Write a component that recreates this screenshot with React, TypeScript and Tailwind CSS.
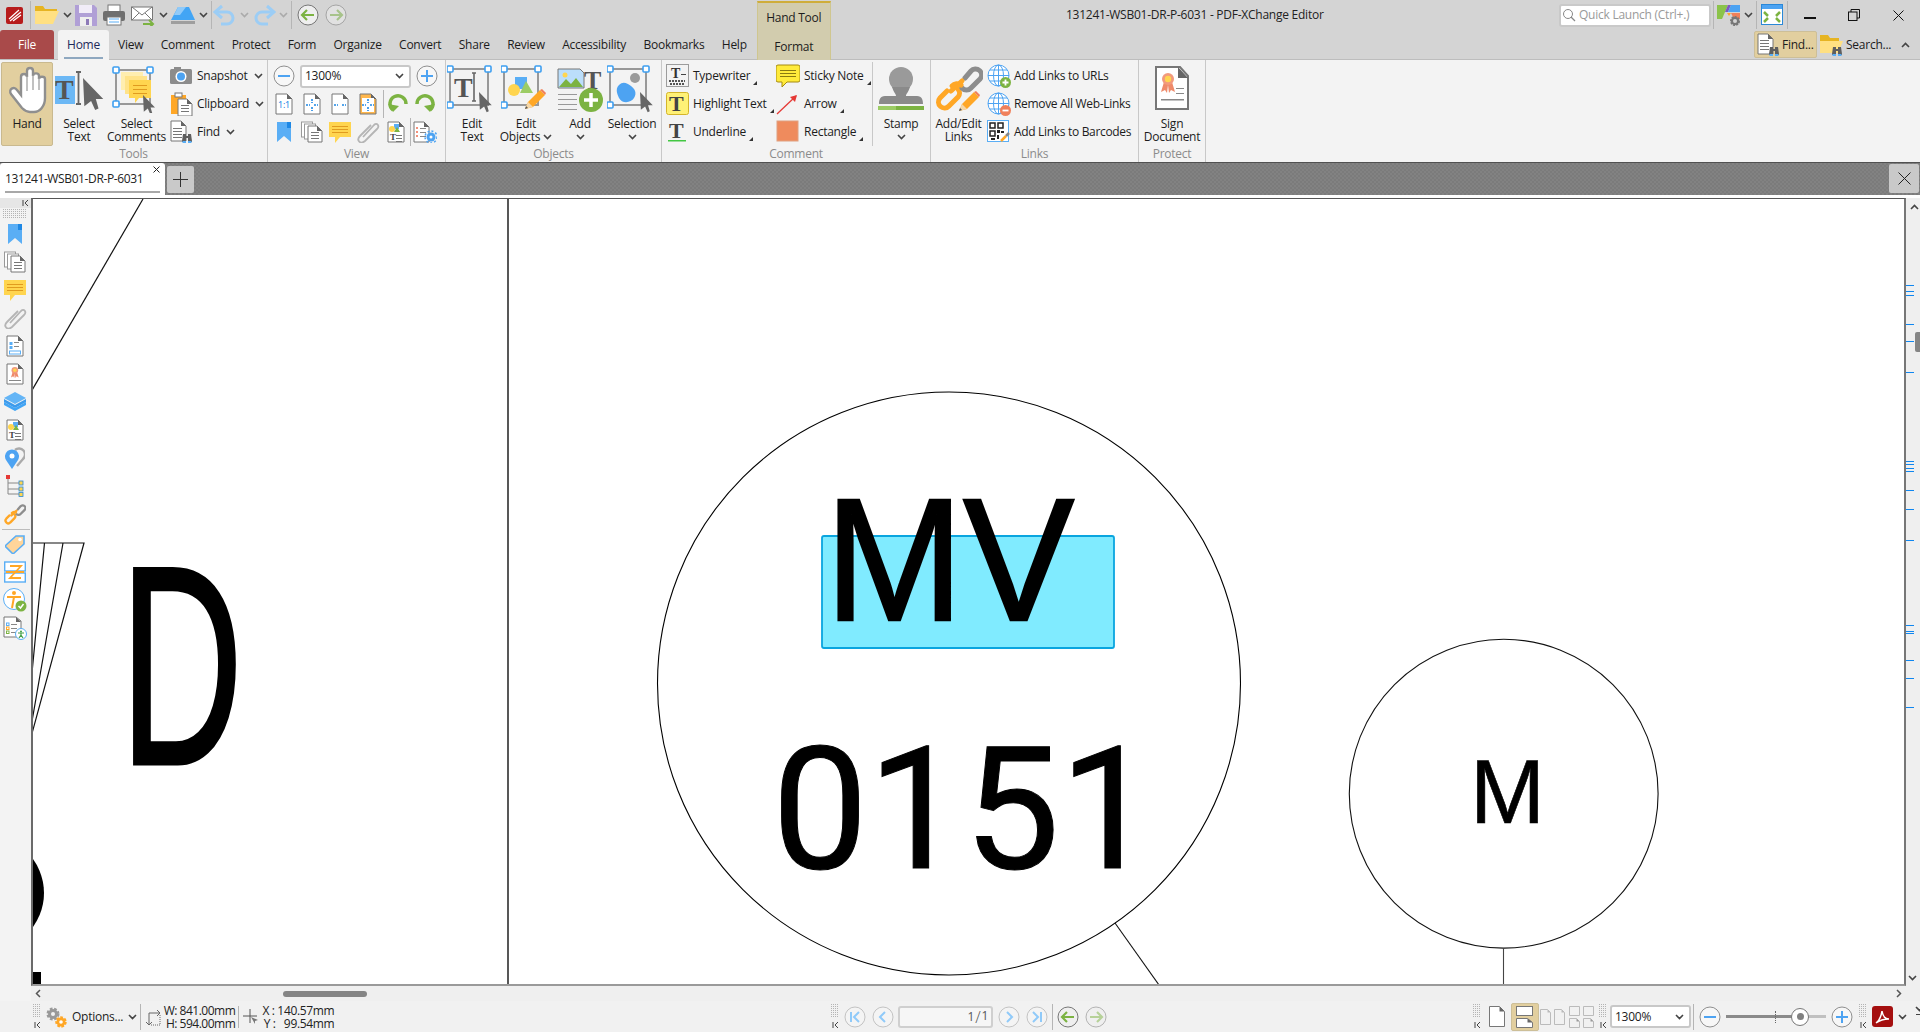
import React from 'react';

type P = { children?: React.ReactNode; w?: number; h?: number; className?: string };
const S = ({ children, w = 24, h = 24, className }: P) => (
  <svg width={w} height={h} viewBox={`0 0 ${w} ${h}`} className={`shrink-0 ${className ?? ''}`} fill="none">{children}</svg>
);
const BL = '#5aaef5', OR = '#ffa726', GN = '#7cb342', YL = '#ffd54f';

const Chev = ({ up, c = '#444' }: { up?: boolean; c?: string }) => (
  <S w={9} h={6}><path d={up ? 'M1 5l3.5-3.5L8 5' : 'M1 1l3.5 3.5L8 1'} stroke={c} strokeWidth="1.6" /></S>
);
const Tri = () => <S w={4} h={4} className="self-end mb-[5px] ml-[3px]"><path d="M4 0v4H0z" fill="#333" /></S>;
const Sep = ({ h = 28, c = '#b5b5b5', mx = 0 }: { h?: number; c?: string; mx?: number }) => (
  <div className="w-px shrink-0" style={{ height: h, background: c, marginLeft: mx, marginRight: mx }} />
);
const Dots = ({ w, h }: { w: number; h: number }) => (
  <S w={w} h={h}>
    {Array.from({ length: Math.floor(h / 2) }).map((_, r) =>
      Array.from({ length: Math.floor(w / 2) }).map((_, c) => <rect key={`${r}-${c}`} x={c * 2} y={r * 2} width={1} height={1} fill="#b4b4b4" />))}
  </S>
);
const Grip = () => (
  <div className="flex flex-col items-center w-[9px] shrink-0 gap-[2px]">
    <Dots w={9} h={15} />
    <S w={7} h={8}><path d="M1 1v6M6 1L3 4l3 3" stroke="#444" strokeWidth="1" /></S>
  </div>
);

/* document primitives */
const Doc = ({ x = 3, y = 1, w = 16, h = 21, s = '#777' }: { x?: number; y?: number; w?: number; h?: number; s?: string }) => (
  <>
    <path d={`M${x} ${y}h${w - 5}l5 5v${h - 5}h-${w}z`} fill="#fff" stroke={s} />
    <path d={`M${x + w - 5} ${y}l5 5h-5z`} fill="#666" />
  </>
);
const Lines = ({ x, y, w, n = 3, g = 3, c = '#888' }: { x: number; y: number; w: number; n?: number; g?: number; c?: string }) => (
  <>{Array.from({ length: n }).map((_, i) => <rect key={i} x={x} y={y + i * g} width={w} height={1} fill={c} />)}</>
);
const Bino = ({ x = 0, y = 0 }: { x?: number; y?: number }) => (
  <g transform={`translate(${x} ${y})`}>
    <path d="M1 2h3v2h2V2h3l1 7v1H6V6H4v4H0V9z" fill="#5f5f5f" />
    <rect x="0.5" y="9" width="3.5" height="2" fill={BL} /><rect x="6" y="9" width="3.5" height="2" fill={BL} />
  </g>
);
const Handles = ({ x, y, w, h, corners = [1, 1, 1, 0] }: { x: number; y: number; w: number; h: number; corners?: number[] }) => (
  <>
    <rect x={x} y={y} width={w} height={h} stroke="#999" strokeWidth="2" fill="none" />
    {[[x, y], [x + w, y], [x, y + h], [x + w, y + h]].map(([a, b], i) =>
      corners[i] ? <rect key={i} x={a - 3} y={b - 3} width={6} height={6} fill="#fff" stroke="#3d9ef0" strokeWidth="1.6" rx="1" /> : null)}
  </>
);
const Cursor = ({ x, y, k = 1 }: { x: number; y: number; k?: number }) => (
  <path transform={`translate(${x} ${y}) scale(${k})`} d="M0 0l15 15.5H9.5l2 7-2.5 1.2-3-6.7L1 21z" fill="#666" />
);
const Pencil = ({ x, y }: { x: number; y: number }) => (
  <g transform={`translate(${x} ${y})`}>
    <path d="M0 20l3-7L15 1l5 5L8 18z" fill={OR} /><path d="M15 1l2-1 4 4-1 2z" fill="#f0805a" />
    <path d="M0 20l3-7 5 5z" fill="#f5d7a8" /><path d="M0 20l1-3 2 2z" fill="#555" />
  </g>
);
const ChainO = ({ x = 0, y = 0, k = 1 }: { x?: number; y?: number; k?: number }) => (
  <g transform={`translate(${x} ${y}) scale(${k})`}>
    <path d="M12 27L5 34a6 6 0 0 0 9 8l9-9a6 6 0 0 0 0-8" stroke={OR} strokeWidth="5" fill="none" strokeLinecap="round" />
    <path d="M30 14l6-7a6 6 0 0 1 9 8l-9 9a6 6 0 0 1-9 0" stroke="#8d8d8d" strokeWidth="5" fill="none" strokeLinecap="round" />
    <path d="M17 22a7 7 0 0 1 9-1M16 27l11-10" stroke={OR} strokeWidth="5" fill="none" strokeLinecap="round" />
  </g>
);
const Seal = ({ x, y, k = 1 }: { x: number; y: number; k?: number }) => (
  <g transform={`translate(${x} ${y}) scale(${k})`}>
    <path d="M3 9L0 19l4-2 2 3 1-8 1 8 2-3 4 2-3-10z" fill="#ef8a6a" />
    <circle cx="7" cy="6" r="6" fill="#f29a7c" /><circle cx="7" cy="6" r="3.2" fill={YL} />
  </g>
);

/* quick access */
const Logo = () => (
  <S w={17} h={17}><rect width="17" height="17" rx="2" fill="#b71c1c" /><path d="M3 12L13 3M4 14L15 5M7 14l8-6" stroke="#fff" strokeWidth="1.2" /></S>
);
const Folder = () => (
  <S w={24} h={20}><path d="M0 1h8l2 3h12v4H0z" fill="#e6b422" /><path d="M0 19V6h4l-1 0h21l-6 13z" fill="#ffe082" /></S>
);
const Save = () => (
  <S w={22} h={22}><path d="M0 1h19l3 3v18H0z" fill="#b09fd6" /><rect x="4" y="1" width="13" height="8" fill="#f1ecf8" /><rect x="5" y="13" width="12" height="9" fill="#eee" /><rect x="11" y="15" width="3" height="6" fill="#8d7ab8" /></S>
);
const Printer = () => (
  <S w={22} h={22}><rect x="5" y="1" width="12" height="7" fill="#fff" stroke="#777" /><rect y="7" width="22" height="10" rx="2" fill="#6f6f6f" /><rect x="4" y="13" width="14" height="8" fill="#fff" stroke="#777" /><path d="M6 15h10M6 18h10" stroke={BL} /></S>
);
const Mail = () => (
  <S w={24} h={22}><rect x="0.5" y="3" width="21" height="13" fill="#fff" stroke="#777" /><path d="M1 3l10 8 10-8M1 16l7-7M21 16l-7-7" stroke="#777" /><path d="M12 20h9M18 16l4 4-4 4" stroke={GN} strokeWidth="2" /></S>
);
const Cloud = () => (
  <S w={24} h={20}><path d="M0 15L7 2h11l6 13z" fill="#42a5f5" /><path d="M7 2h8l-6 8H3z" fill="#90caf9" /><rect y="16" width="24" height="3" fill="#9e9e9e" /></S>
);
const Undo = ({ flip }: { flip?: boolean }) => (
  <S w={22} h={22}><g transform={flip ? 'translate(22 0) scale(-1 1)' : undefined}><path d="M4 8h10a6 6 0 0 1 0 12H8" stroke="#9ccdf5" strokeWidth="3" /><path d="M9 2L2 8l7 6" stroke="#9ccdf5" strokeWidth="3" /></g></S>
);
const CircArrow = ({ dir = -1, faded, s = 22, ic = GN }: { dir?: number; faded?: boolean; s?: number; ic?: string }) => (
  <S w={s} h={s}>
    <g opacity={faded ? 0.5 : 1} transform={`scale(${s / 22})`}>
      <circle cx="11" cy="11" r="10" fill="#efefef" stroke="#777" />
      <path d={dir < 0 ? 'M17 11H6M10 6l-5 5 5 5' : 'M5 11h11M12 6l5 5-5 5'} stroke={ic} strokeWidth="2.2" />
    </g>
  </S>
);
const NavCirc = ({ kind }: { kind: string }) => (
  <S w={22} h={22}>
    <circle cx="11" cy="11" r="10" fill="#f4f4f4" stroke="#c3c3c3" />
    <path d={kind === 'first' ? 'M7 6v10M15 6l-5 5 5 5' : kind === 'prev' ? 'M13 6l-5 5 5 5' : kind === 'next' ? 'M9 6l5 5-5 5' : 'M15 6v10M7 6l5 5-5 5'} stroke="#90caf9" strokeWidth="2" />
  </S>
);
const Zoomer = ({ plus }: { plus?: boolean }) => (
  <S w={22} h={22}>
    <circle cx="11" cy="11" r="10" fill="#f7f7f7" stroke="#8f8f8f" />
    <path d={plus ? 'M5 11h12M11 5v12' : 'M5 11h12'} stroke="#4da3f2" strokeWidth="2" />
  </S>
);

/* big ribbon icons (48x48ish) */
const HandIco = () => (
  <S w={40} h={50}>
    <path d="M15 43L4 29c-3-5 3-8 6-4l4 5V12c0-4 6-4 6 0V6c0-4 6-4 6 0v5c0-3.500 6-3.500 6 0v3c0-3 6-3 6 0v19c0 8-5 14-11 14H23c-3 0-6-2-8-4z" fill="#fff" stroke="#8f8f8f" strokeWidth="2.400" />
    <path d="M20 11v15M26 10v15M32 13v12" stroke="#a0a0a0" strokeWidth="1.300" />
  </S>
);
const T = ({ x, y, s = 24, c = '#555' }: { x: number; y: number; s?: number; c?: string }) => (
  <text x={x} y={y} fontSize={s} fontWeight="700" fill={c} fontFamily="'Liberation Serif',serif">T</text>
);
const SelTextIco = () => (
  <S w={50} h={48}>
    <rect x="1" y="11" width="20" height="28" fill="#6cb8f5" />
    <T x={1} y={34} s={28} />
    <path d="M22 7h5M24.500 7v32M22 39h5" stroke="#666" strokeWidth="1.8" />
    <Cursor x={29} y={13} k={1.35} />
  </S>
);
const SelComIco = () => (
  <S w={50} h={48}>
    <Handles x={4} y={5} w={34} h={34} />
    <rect x="9" y="7" width="22" height="18" fill="#ffeeb0" /><rect x="13" y="11" width="22" height="18" fill="#ffe38a" />
    <path d="M17 15h22v18H27l-4 5v-5h-6z" fill={YL} /><Lines x={21} y={20} w={14} g={4} c="#e09b1f" />
    <Cursor x={31} y={30} k={0.8} />
  </S>
);
const EditTextIco = () => (
  <S w={50} h={48}>
    <Handles x={3} y={4} w={38} h={36} corners={[1, 1, 1, 0]} />
    <T x={7} y={32} s={28} />
    <path d="M25 8h4M27 8v28M25 36h4" stroke="#666" strokeWidth="1.6" />
    <Cursor x={32} y={27} k={0.85} />
  </S>
);
const EditObjIco = () => (
  <S w={50} h={48}>
    <Handles x={3} y={4} w={34} h={36} />
    <rect x="14" y="12" width="12" height="12" fill={BL} /><path d="M19 28l6-12 7 12z" fill="#9ccc65" /><circle cx="13" cy="25" r="6" fill={YL} />
    <Pencil x={24} y={24} />
  </S>
);
const AddIco = () => (
  <S w={48} h={48}>
    <path d="M2 4h22l4 4v15H2z" fill="#bbdefb" stroke="#777" /><path d="M3 22l7-8 5 5 5-6 7 9z" fill={GN} /><circle cx="9" cy="10" r="2.500" fill={YL} />
    <T x={28} y={24} s={26} />
    <Lines x={2} y={29} w={19} n={4} g={5} c="#999" />
    <circle cx="35" cy="35" r="12" fill={GN} /><path d="M35 28v14M28 35h14" stroke="#fff" strokeWidth="3.500" />
  </S>
);
const SelectionIco = () => (
  <S w={50} h={48}>
    <Handles x={3} y={4} w={36} h={36} />
    <path d="M12 20c4-4 8-2 12 1s6 7 3 12-12 6-15 0-3-10 0-13z" fill="#4da3f2" /><circle cx="28" cy="13" r="5" fill="#9a9a9a" />
    <Cursor x={33} y={27} k={0.85} />
  </S>
);
const StampIco = () => (
  <S w={48} h={48}>
    <circle cx="24" cy="14" r="12" fill="#9a9a9a" /><path d="M15 22c2 6 4 7 4 9H8c-5 0-6 4-6 8h44c0-4-1-8-6-8H29c0-2 2-3 4-9z" fill="#8a8a8a" />
    <rect x="1" y="41" width="18" height="4" fill="#9ccc65" /><rect x="19" y="41" width="28" height="4" fill={GN} />
  </S>
);
const AddLinkIco = () => (
  <S w={48} h={48}><ChainO y={-1} /><Pencil x={24} y={26} /></S>
);
const SignIco = () => (
  <S w={36} h={46}>
    <path d="M2 2h24l8 9v33H2z" fill="#fff" stroke="#777" strokeWidth="2" /><path d="M24 2l10 11H24z" fill="#666" />
    <Seal x={7} y={8} k={1} /><Lines x={22} y={23} w={8} n={2} g={5} c="#888" /><rect x="7" y="34" width="23" height="1.500" fill="#888" />
  </S>
);

/* small 24 */
const Snapshot = () => (
  <S><rect y="5" width="22" height="15" rx="1.500" fill="#8c8c8c" /><rect x="4" y="3" width="7" height="3" fill="#8c8c8c" /><circle cx="11" cy="12.500" r="5.500" fill="#fff" /><circle cx="11" cy="12.500" r="4" fill="#4da3f2" /></S>
);
const Clipboard = () => (
  <S><rect x="1" y="3" width="15" height="19" fill={OR} /><rect x="5" y="1" width="7" height="4" fill="#fff" stroke="#777" /><Doc x={8} y={7} w={14} h={17} /><Lines x={11} y={13} w={8} c="#777" /></S>
);
const FindIco = () => (
  <S><Doc x={1} y={1} w={15} h={20} /><Lines x={3} y={8} w={9} n={4} c="#777" /><Bino x={12} y={12} /></S>
);
const ZoomDoc = ({ kind }: { kind: string }) => (
  <S w={18} h={22}>
    <path d="M1 1h11l5 5v15H1z" fill={kind === 'o' ? '#ffb74d' : '#fff'} stroke="#777" /><path d="M12 1l5 5h-5z" fill="#666" />
    {kind === 'o' && <rect x="3" y="5" width="12" height="14" fill="#fff" />}
    {kind === '1' ? <text x="3" y="15" fontSize="9" fill="#1e88e5" fontFamily="'Noto Sans',sans-serif">1:1</text> :
      <path d={kind === 'w' ? 'M3 12h4M11 12h4' : 'M3 12h4M11 12h4M9 6v4M9 14v4'} stroke="#1e88e5" strokeWidth="1.600" strokeDasharray="2 1" />}
  </S>
);
const Rotate = ({ flip }: { flip?: boolean }) => (
  <S w={22} h={22}><g transform={flip ? 'translate(22 0) scale(-1 1)' : undefined}><path d="M6 17a8 8 0 1 1 13-6" stroke={GN} strokeWidth="3.500" /><path d="M1 11l5 8 6-6z" fill={GN} /></g></S>
);
const Bookmark = ({ s = 20 }: { s?: number }) => (
  <S w={14} h={s}><path d={`M0 0h14v${s}l-7-6-7 6z`} fill="#5aaef5" /><rect x="10" width="4" height="6" fill="#1e88e5" /></S>
);
const Pages = () => (
  <S w={22} h={22}><rect x="0.500" y="1" width="11" height="15" fill="#fff" stroke="#999" /><rect x="3.500" y="3" width="11" height="15" fill="#fff" stroke="#999" /><Doc x={7} y={5} w={14} h={16} /><Lines x={10} y={11} w={8} c="#777" /></S>
);
const Note = () => (
  <S w={22} h={22}><path d="M0 1h22v15H11l-5 6v-6H0z" fill={YL} /><Lines x={3} y={5} w={16} n={3} c="#e09b1f" /></S>
);
const Clip = () => (
  <S w={23} h={22}><path d="M6 16L17 4c3-3 6 1 3 4L8 20c-5 4-9-1-5-5L14 4" stroke="#b5b5b5" strokeWidth="1.800" /></S>
);
const ObjDoc = () => (
  <S w={18} h={22}><Doc x={1} y={1} w={16} h={20} /><rect x="7" y="3" width="5" height="5" fill={BL} /><circle cx="5" cy="8" r="3" fill={YL} /><path d="M7 11l3-5 3 5z" fill={GN} /><T x={3} y={19} s={9} c="#444" /><Lines x={9} y={14} w={6} c="#777" /></S>
);
const ListCog = () => (
  <S w={24} h={22}>
    <Doc x={1} y={1} w={15} h={20} />
    <path d="M3 7h2M3 11h2M3 15h2" stroke="#ef6c4f" strokeWidth="1.500" /><Lines x={7} y={7} w={6} n={3} g={4} c="#888" />
    <circle cx="18" cy="16" r="4.500" fill="#4da3f2" /><circle cx="18" cy="16" r="6" stroke="#4da3f2" strokeWidth="1.500" strokeDasharray="2 2" /><circle cx="18" cy="16" r="1.500" fill="#fff" />
  </S>
);
const Typewriter = () => (
  <S><rect x="0.500" y="0.500" width="22" height="22" fill="none" stroke="#444" strokeDasharray="1 1" /><T x={5} y={14} s={14} c="#333" /><rect x="15" y="10" width="5" height="1" fill="#444" /><path d="M3 17h16M4 20h14" stroke="#555" strokeWidth="2" strokeDasharray="2 1" /></S>
);
const HiliteT = () => (
  <S><rect x="0.500" y="0.500" width="22" height="22" rx="2" fill="#fff176" stroke="#d4b52a" /><T x={3} y={19} s={22} c="#444" /></S>
);
const UnderT = () => (
  <S><T x={3} y={18} s={22} c="#444" /><rect x="2" y="20" width="18" height="1.500" fill="#43c743" /></S>
);
const Sticky = () => (
  <S h={24}><path d="M2 1h20a2 2 0 0 1 2 2v13a2 2 0 0 1-2 2H11l-5 5v-5H2a2 2 0 0 1-2-2V3a2 2 0 0 1 2-2z" fill="#ffeb3b" stroke="#a58a10" /><Lines x={4} y={6} w={16} n={3} c="#8a7a10" /></S>
);
const ArrowI = () => (
  <S><path d="M1 22L20 4" stroke="#e53935" strokeWidth="1.300" /><path d="M21 3l-7 2 5 5z" fill="#e53935" /></S>
);
const RectI = () => <S><rect x="1" y="1" width="21" height="20" fill="#ef8b5d" stroke="#e0a080" /></S>;
const Globe = ({ kind }: { kind: string }) => (
  <S w={25} h={25}>
    <circle cx="11.500" cy="11.500" r="10.500" fill="#fff" stroke="#4da3f2" />
    <ellipse cx="11.500" cy="11.500" rx="5" ry="10.500" stroke="#4da3f2" /><path d="M1 11.500h21M3 6h17M3 17h17M11.500 1v21" stroke="#4da3f2" />
    <circle cx="18.500" cy="18.500" r="5.500" fill={kind === 'a' ? GN : '#f0805a'} />
    <path d={kind === 'a' ? 'M15.500 18.500h6M18.500 15.500v6' : 'M15.500 18.500h6'} stroke="#fff" strokeWidth="1.800" />
  </S>
);
const Qr = () => (
  <S w={24} h={24}>
    <rect x="0.500" y="0.500" width="21" height="21" fill="#fff" stroke={BL} />
    <path d="M3 3h5v5H3zM11 3h5v5h-5zM3 11h5v5H3z" stroke="#222" strokeWidth="1.500" /><path d="M10 10h3v3h-3zM14 11h3v2h-3zM4 18h4v2H4zM10 15h2v4h-2z" fill="#222" />
    <path d="M14 21l5-5" stroke={OR} strokeWidth="2.500" /><path d="M19 16l3-3" stroke="#888" strokeWidth="2.500" />
  </S>
);

/* rail */
const Rail: React.ReactNode[] = [
  <Bookmark key="a" />, <Pages key="b" />, <Note key="c" />, <Clip key="d" />,
  <S key="e" w={18} h={22}><Doc x={1} y={1} w={16} h={20} /><rect x="3.500" y="7" width="3" height="3" fill={BL} /><rect x="3.500" y="11" width="3" height="3" fill={BL} /><Lines x={8} y={7} w={5} n={2} g={4} c="#888" /><rect x="3.500" y="16" width="11" height="3" stroke={BL} /></S>,
  <S key="f" w={18} h={22}><Doc x={1} y={1} w={16} h={20} /><Seal x={5} y={4} k={0.55} /><Lines x={3} y={17} w={12} n={1} c="#888" /></S>,
  <S key="g" w={22} h={20}><path d="M11 0l11 6-11 6L0 6z" fill="#64b5f6" /><path d="M0 10l11 6 11-6v3l-11 6-11-6z" fill="#42a5f5" /><path d="M0 7l11 6 11-6v3l-11 6-11-6z" fill="#3d9bec" /></S>,
  <ObjDoc key="h" />,
  <S key="i" w={20} h={22}><path d="M10 3a6 6 0 0 1 8 9l-6 7" stroke="#aaa" strokeWidth="2.400" /><path d="M7 22L1 13a7 7 0 1 1 12 0z" fill="#4da3f2" /><circle cx="7" cy="9" r="2.500" fill="#fff" /></S>,
  <S key="j" w={20} h={22}><rect x="1" y="0" width="4" height="4" fill="#e53935" /><path d="M3 4v15M3 8h12M3 14h12M3 19h12" stroke="#888" /><rect x="14" y="6" width="4" height="4" fill={YL} stroke="#2a88d8" strokeWidth="0.800" /><rect x="14" y="12" width="4" height="4" fill={YL} stroke="#2a88d8" strokeWidth="0.800" /><rect x="14" y="17.500" width="4" height="4" fill={YL} stroke="#2a88d8" strokeWidth="0.800" /></S>,
  <S key="k" w={22} h={22}><ChainO k={0.46} /></S>,
];
const Rail2: React.ReactNode[] = [
  <S key="l" w={20} h={20}><path d="M0 12L11 2h8v8L8 20z" fill="#ffd59a" stroke="#5aaef5" strokeWidth="1.600" /><circle cx="15" cy="5.500" r="1.800" fill="#fff" /></S>,
  <S key="m" w={22} h={22}><rect x="0.700" y="1" width="20.600" height="9" fill="#fff" stroke={BL} strokeWidth="1.400" /><rect x="0.700" y="12" width="20.600" height="9" fill="#fff" stroke={BL} strokeWidth="1.400" /><path d="M6 5h11L6 17h11M2 11h18" stroke={OR} strokeWidth="1.800" /></S>,
  <S key="n" w={24} h={24}><circle cx="11" cy="11" r="10.500" fill="#fff" stroke={BL} /><circle cx="11" cy="5" r="2" fill={OR} /><path d="M4 9h14M11 9L9 20" stroke={OR} strokeWidth="2" /><circle cx="18" cy="18" r="5.500" fill={GN} /><path d="M15.500 18l2 2 3-4" stroke="#fff" strokeWidth="1.500" /></S>,
  <S key="o" w={24} h={24}><path d="M1 1h12l5 4v16H1z" fill="#fff" stroke="#777" /><path d="M13 1l5 5h-5z" fill="#666" /><rect x="3.500" y="7" width="2.500" height="2.500" stroke={BL} /><rect x="3.500" y="11" width="2.500" height="2.500" stroke={OR} /><rect x="3.500" y="15" width="2.500" height="2.500" stroke={GN} /><Lines x={8} y={8} w={6} n={3} g={4} c="#888" /><circle cx="18" cy="18" r="5.500" fill="#fff" stroke={BL} /><circle cx="18" cy="15.500" r="1" fill="#43a047" /><path d="M15 17h6M18 17v2l-2 3M18 19l2 3" stroke="#43a047" strokeWidth="1.200" /></S>,
];

/* ribbon pieces */
const Big = ({ w, icon, lines, chev, k }: { w: number; icon: React.ReactNode; lines: string[]; chev?: boolean; k?: string }) => (
  <div style={{ width: w }} className={`shrink-0 h-[84px] flex flex-col items-center ${k ?? ''}`}>
    <div className="h-[55px] pt-[3px] flex items-start justify-center">{icon}</div>
    {lines.map(l => <div key={l} className="h-[13px] leading-[13px] whitespace-nowrap flex items-center gap-[3px]">{l}{chev && l === lines[lines.length - 1] && lines.length > 1 ? <Chev /> : null}</div>)}
    {chev && lines.length === 1 && <div className="h-[13px] flex items-center"><Chev /></div>}
  </div>
);
const Row = ({ icon, label, chev, tri, gap = 3, w }: { icon: React.ReactNode; label: string; chev?: boolean; tri?: boolean; gap?: number; w?: number }) => (
  <div className="h-[28px] flex items-center whitespace-nowrap" style={{ width: w }}>
    <div style={{ marginRight: gap }} className="shrink-0 flex">{icon}</div>
    <span>{label}</span>
    {chev && <span className="ml-[6px] flex"><Chev /></span>}
    {tri && <Tri />}
  </div>
);
const Group = ({ w, label, children }: { w: number; label: string; children: React.ReactNode }) => (
  <div style={{ width: w }} className="shrink-0 h-full flex flex-col border-r border-[#c8c8c8]">
    <div className="h-[84px] mt-[2px] flex items-start">{children}</div>
    <div className="flex-1 text-center text-[#8b8b8b] leading-[14px] pt-[1px]">{label}</div>
  </div>
);
const Cell = ({ w, children }: { w: number; children: React.ReactNode }) => (
  <div style={{ width: w }} className="shrink-0 flex justify-center items-center h-[28px]">{children}</div>
);

const tabs = ['View', 'Comment', 'Protect', 'Form', 'Organize', 'Convert', 'Share', 'Review', 'Accessibility', 'Bookmarks', 'Help'];
const marks = [285, 291, 295, 324, 341, 372, 461, 464, 468, 471, 490, 509, 540, 625, 631, 633, 660, 678, 707];

const Combo = ({ w }: { w: number }) => (
  <div style={{ width: w }} className="h-[23px] bg-white border-2 border-[#c8c8c8] rounded-[3px] flex items-center justify-between pl-[3px] pr-[5px]">
    <span>1300%</span><Chev />
  </div>
);

export default function App() {
  return (
    <div className="w-[1920px] h-[1032px] overflow-hidden flex flex-col bg-[#f3f3f3] text-[#1c1c1c] text-[12px] font-['Open_Sans',sans-serif] tracking-[-0.25px]">
      {/* title bar */}
      <div className="h-[30px] shrink-0 bg-[#d4d4d4] flex items-center">
        <div className="w-[1066px] shrink-0 flex items-center h-full">
          <div className="ml-[6px] mr-[7px] flex"><Logo /></div>
          <Sep />
          <div className="ml-[4px] flex"><Folder /></div>
          <div className="ml-[4px] mr-[3px] flex"><Chev /></div>
          <Save />
          <div className="ml-[6px] flex"><Printer /></div>
          <div className="ml-[6px] flex"><Mail /></div>
          <div className="ml-[4px] mr-[3px] flex"><Chev /></div>
          <Cloud />
          <div className="ml-[4px] mr-[3px] flex"><Chev /></div>
          <Sep />
          <div className="ml-[1px] flex"><Undo /></div>
          <div className="ml-[5px] mr-[5px] flex"><Chev c="#aaa" /></div>
          <Undo flip />
          <div className="ml-[3px] mr-[3px] flex"><Chev c="#aaa" /></div>
          <Sep />
          <div className="ml-[5px] flex"><CircArrow /></div>
          <div className="ml-[6px] flex"><CircArrow dir={1} faded /></div>
        </div>
        <div className="whitespace-nowrap -mt-[1px] text-[#222] w-[493px] shrink-0">131241-WSB01-DR-P-6031 - PDF-XChange Editor</div>
        <div className="w-[152px] h-[23px] shrink-0 bg-white border-2 border-[#c9c9c9] rounded-[3px] flex items-center pl-[1px] gap-[3px] text-[#9a9a9a]">
          <S w={14} h={14}><circle cx="6" cy="6" r="4.500" stroke="#888" /><path d="M9 9l4 4" stroke="#888" strokeWidth="1.300" /></S>
          <span className="whitespace-nowrap">Quick Launch (Ctrl+.)</span>
        </div>
        <div className="ml-[2px] flex"><Sep /></div>
        <div className="ml-[3px] flex">
          <S w={24} h={24}><path d="M0 2h11L5 16H0z" fill="#8bc34a" /><path d="M11 2h3l-3 7H8z" fill="#7e57c2" /><path d="M14 2h9v7H11z" fill="#4da3f2" /><path d="M10 10h4l-2 3z" fill={OR} /><path d="M14 10h9v6h-6z" fill="#f0805a" /><circle cx="18" cy="18" r="4" fill="#777" stroke="#777" strokeWidth="2" strokeDasharray="2 1" /><circle cx="18" cy="18" r="2" fill="#d4d4d4" /></S>
        </div>
        <div className="ml-[3px] mr-[3px] flex"><Chev /></div>
        <Sep />
        <div className="ml-[4px] flex">
          <S w={22} h={22}><rect x="0.500" y="0.500" width="21" height="20" fill="#fff" stroke="#2a88d8" /><rect x="1" y="1" width="20" height="4" fill="#4da3f2" /><path d="M3 8l4 4M19 8l-4 4M3 18l4-4M19 18l-4-4" stroke={GN} strokeWidth="2.500" /></S>
        </div>
        <div className="ml-[4px] flex"><Sep /></div>
        <div className="flex-1 flex items-center">
          <div className="w-[44px] flex justify-center pt-[6px]"><div className="w-[12px] h-[1.5px] bg-[#111]" /></div>
          <div className="w-[44px] flex justify-center">
            <S w={12} h={12}><rect x="0.500" y="3" width="8.500" height="8.500" stroke="#111" /><path d="M3 3V0.500h8.500V9H9" stroke="#111" /></S>
          </div>
          <div className="w-[44px] flex justify-center">
            <S w={11} h={11}><path d="M0.500 0.500l10 10M10.500 0.500l-10 10" stroke="#111" /></S>
          </div>
        </div>
      </div>

      {/* tabs row */}
      <div className="h-[30px] shrink-0 bg-[#d4d4d4] border-b border-[#bdbdbd] flex items-stretch relative">
        <div className="w-[54px] ml-0 bg-[#a94a4a] rounded-t-[3px] text-white flex items-center justify-center">File</div>
        <div className="w-[51px] ml-[4px] bg-[#f3f3f3] rounded-t-[3px] text-[#1e2a5a] flex flex-col items-center justify-center relative -mb-[1px]">
          Home
          <div className="absolute bottom-[1px] left-[6px] right-[6px] h-[2px] bg-[#8fa8c0]" />
        </div>
        <div className="flex items-center ml-[9px] gap-[17.4px]">
          {tabs.map(t => <span key={t}>{t}</span>)}
        </div>
        <div className="w-[74px] ml-[10px] -mt-[29px] h-[59px] bg-[#d2ccae] border-x border-[#cfc68f] border-t-2 border-t-[#cfad3a] flex flex-col items-center relative">
          <div className="h-[30px] flex items-center">Hand Tool</div>
          <div className="h-[27px] flex items-center">Format</div>
        </div>
        <div className="flex-1" />
        <div className="w-[63px] h-[27px] my-auto bg-[#e2cf9f] border border-[#cdbf98] rounded-[2px] flex items-center gap-[1px] pl-[2px]">
          <S w={24} h={24}><Doc x={1} y={1} w={15} h={20} /><Lines x={3} y={7} w={9} n={4} c="#777" /><Bino x={12} y={12} /></S>
          <span>Find...</span>
        </div>
        <div className="w-[70px] ml-[3px] flex items-center gap-[2px]">
          <S w={24} h={24}><path d="M0 2h8l2 3h9v3H0z" fill="#e6b422" /><path d="M0 20V8h23l-5 12z" fill="#ffe082" /><Bino x={12} y={12} /></S>
          <span>Search...</span>
        </div>
        <div className="w-[30px] flex items-center justify-center"><Chev up /></div>
      </div>

      {/* ribbon */}
      <div className="h-[102px] shrink-0 bg-[#f3f3f3] flex border-b border-[#505050] box-content">
        <Group w={268} label="Tools">
          <div className="w-[52px] h-[84px] ml-[1px] bg-[#e2cf9f] border border-[#c9b98f] rounded-[2px] shrink-0 flex flex-col items-center">
            <div className="h-[52px] pt-[2px] flex"><HandIco /></div>
            <div className="h-[13px] leading-[13px] mt-[2px]">Hand</div>
          </div>
          <Big w={50} icon={<SelTextIco />} lines={['Select', 'Text']} k="ml-[1px]" />
          <Big w={65} icon={<SelComIco />} lines={['Select', 'Comments']} />
          <div className="flex flex-col ml-[1px]">
            <Row icon={<Snapshot />} label="Snapshot" chev gap={3} />
            <Row icon={<Clipboard />} label="Clipboard" chev gap={3} />
            <Row icon={<FindIco />} label="Find" chev gap={3} />
          </div>
        </Group>
        <Group w={178} label="View">
          <div className="flex flex-col">
            <div className="h-[28px] flex items-center gap-[5px] ml-[5px]"><Zoomer /><Combo w={111} /><Zoomer plus /></div>
            <div className="h-[28px] flex items-center ml-[2px]">
              <Cell w={28}><ZoomDoc kind="1" /></Cell><Cell w={28}><ZoomDoc kind="f" /></Cell><Cell w={28}><ZoomDoc kind="w" /></Cell><Cell w={28}><ZoomDoc kind="o" /></Cell>
              <div className="ml-[1px]"><Sep /></div>
              <Cell w={27}><Rotate /></Cell><Cell w={28}><Rotate flip /></Cell>
            </div>
            <div className="h-[28px] flex items-center ml-[2px]">
              <Cell w={28}><Bookmark /></Cell><Cell w={28}><Pages /></Cell><Cell w={28}><Note /></Cell><Cell w={28}><Clip /></Cell><Cell w={28}><ObjDoc /></Cell>
              <Sep />
              <Cell w={28}><ListCog /></Cell>
            </div>
          </div>
        </Group>
        <Group w={216} label="Objects">
          <Big w={52} icon={<EditTextIco />} lines={['Edit', 'Text']} />
          <Big w={56} icon={<EditObjIco />} lines={['Edit', 'Objects']} chev />
          <Big w={52} icon={<AddIco />} lines={['Add']} chev />
          <Big w={52} icon={<SelectionIco />} lines={['Selection']} chev />
        </Group>
        <Group w={269} label="Comment">
          <div className="flex flex-col ml-[4px] w-[110px]">
            <Row icon={<Typewriter />} label="Typewriter" tri />
            <Row icon={<HiliteT />} label="Highlight Text" tri />
            <Row icon={<UnderT />} label="Underline" tri />
          </div>
          <div className="flex flex-col w-[96px]">
            <Row icon={<Sticky />} label="Sticky Note" tri gap={4} />
            <Row icon={<ArrowI />} label="Arrow" tri gap={4} />
            <Row icon={<RectI />} label="Rectangle" tri gap={4} />
          </div>
          <Sep h={84} c="#c8c8c8" />
          <Big w={56} icon={<StampIco />} lines={['Stamp']} chev />
        </Group>
        <Group w={208} label="Links">
          <Big w={55} icon={<AddLinkIco />} lines={['Add/Edit', 'Links']} />
          <div className="flex flex-col ml-[1px] tracking-[-0.32px]">
            <Row icon={<Globe kind="a" />} label="Add Links to URLs" gap={2} />
            <Row icon={<Globe kind="r" />} label="Remove All Web-Links" gap={2} />
            <Row icon={<Qr />} label="Add Links to Barcodes" gap={3} />
          </div>
        </Group>
        <Group w={67} label="Protect">
          <Big w={66} icon={<SignIco />} lines={['Sign', 'Document']} />
        </Group>
      </div>

      {/* doc tabs */}
      <div className="h-[32px] shrink-0 flex items-stretch bg-[repeating-conic-gradient(#7b7b7b_0_25%,#828282_0_50%)] bg-[length:4px_4px]">
        <div className="w-[165px] bg-white rounded-t-[3px] relative pl-[5px] flex items-center text-[#222] whitespace-nowrap tracking-[-0.38px]">
          131241-WSB01-DR-P-6031
          <div className="absolute top-[3px] right-[5px] flex"><S w={7} h={7}><path d="M0.500 0.500l6 6M6.500 0.500l-6 6" stroke="#222" /></S></div>
          <div className="absolute bottom-[2px] left-[5px] w-[155px] h-[2px] bg-[#a8a8a8]" />
        </div>
        <div className="w-[27px] h-[27px] ml-[2px] mt-[3px] bg-[#c9c9c9] rounded-[2px] flex items-center justify-center">
          <S w={15} h={15}><path d="M7.500 0v15M0 7.500h15" stroke="#333" /></S>
        </div>
        <div className="flex-1" />
        <div className="w-[30px] h-[29px] mt-[1px] mr-[1px] bg-[#c9c9c9] rounded-[2px] flex items-center justify-center">
          <S w={13} h={13}><path d="M0.500 0.500l12 12M12.500 0.500l-12 12" stroke="#222" /></S>
        </div>
      </div>
      <div className="h-[3px] shrink-0 bg-white" />

      {/* main */}
      <div className="h-[803px] shrink-0 flex">
        <div className="w-[31px] shrink-0 bg-[#f3f3f3] flex flex-col items-center">
          <div className="w-full h-[10px] bg-[#e6e6e6] flex justify-end items-center pr-[2px]">
            <S w={7} h={8}><path d="M1 1v6M6 1L3 4l3 3" stroke="#444" /></S>
          </div>
          <div className="mt-[1px] flex"><Dots w={25} h={10} /></div>
          <div className="flex flex-col items-center mt-[1px] pr-[1px]">
            {Rail.map((r, i) => <div key={i} className="h-[28px] flex items-center justify-center">{r}</div>)}
          </div>
          <div className="w-[28px] h-px bg-[#bcbcbc] mt-[1px]" />
          <div className="flex flex-col items-center pr-[1px]">
            {Rail2.map((r, i) => <div key={i} className="h-[28px] flex items-center justify-center">{r}</div>)}
          </div>
        </div>
        <div className="flex-1 flex flex-col min-w-0">
          <div className="h-[788px] shrink-0 flex">
            <div className="flex-1 bg-white border-l-2 border-r-2 border-t border-b-2 border-l-[#6a6a6a] border-r-[#777777] border-t-[#555555] border-b-[#9a9a9a] overflow-hidden">
              <svg width="1871" height="785" viewBox="33 199 1871 785" className="block" fontFamily="'Liberation Sans',Arial,sans-serif">
                <line x1="508" y1="199" x2="508" y2="985" stroke="#111" strokeWidth="1.400" />
                <line x1="143" y1="199" x2="31" y2="392" stroke="#111" strokeWidth="1.200" />
                <path d="M31 543H84L31 737M63 543L31 727M44.500 543L31 683" stroke="#111" strokeWidth="1.200" fill="none" />
                <text transform="translate(120 764) scale(0.6 1)" fontSize="284" fill="#000" stroke="#000" strokeWidth="3">D</text>
                <circle cx="-13.700" cy="893" r="57.700" fill="#000" />
                <rect x="31" y="972" width="10" height="13" fill="#000" />
                <circle cx="949" cy="683.500" r="291.500" fill="#fff" stroke="#000" strokeWidth="1.100" />
                <line x1="1115" y1="923" x2="1159" y2="985" stroke="#111" strokeWidth="1.100" />
                <rect x="822" y="536" width="292" height="112" rx="2" fill="#80ebff" stroke="#0aa5df" strokeWidth="1.800" />
                <text transform="translate(825 620) scale(0.95 1)" fontSize="175" fill="#000" stroke="#000" strokeWidth="2.500">MV</text>
                <text x="772" y="868" fontSize="171" fill="#000" stroke="#000" strokeWidth="1" fontFamily="Roboto,sans-serif">0151</text>
                <circle cx="1503.700" cy="793.700" r="154.400" fill="#fff" stroke="#111" strokeWidth="1.100" />
                <line x1="1503.500" y1="948" x2="1503.500" y2="985" stroke="#444" strokeWidth="1.100" />
                <text x="1470" y="823" fontSize="90" fill="#000" stroke="#000" strokeWidth="0.600">M</text>
              </svg>
            </div>
            <div className="w-[14px] shrink-0 bg-[#efefef] relative">
              <div className="absolute left-[4px] top-[6px] flex"><Chev up /></div>
              {marks.map(m => <div key={m} className="absolute left-0 w-[8px] h-px bg-[#0f86f0]" style={{ top: m - 198 }} />)}
              <div className="absolute right-0 top-[134px] w-[5px] h-[20px] bg-[#858585] rounded-l-[2px]" />
              <div className="absolute left-[2px] bottom-[5px] flex"><Chev /></div>
            </div>
          </div>
          <div className="flex-1 bg-[#efefef] flex items-center justify-between pl-[4px] pr-[18px]">
            <S w={6} h={9}><path d="M5 1L1.500 4.500 5 8" stroke="#555" strokeWidth="1.500" /></S>
            <div className="flex-1 h-[6px] ml-[242px]"><div className="w-[84px] h-[6px] bg-[#858585] rounded-[3px]" /></div>
            <S w={6} h={9}><path d="M1 1l3.500 3.500L1 8" stroke="#555" strokeWidth="1.500" /></S>
          </div>
        </div>
      </div>

      {/* status bar */}
      <div className="h-[31px] shrink-0 bg-[#f1f1f1] flex items-center">
        <div className="w-[831px] shrink-0 flex items-center">
          <div className="ml-[33px]"><Grip /></div>
          <div className="ml-[3px] flex">
            <S w={24} h={24}><circle cx="8" cy="9" r="5" fill="#999" stroke="#999" strokeWidth="3" strokeDasharray="2.500 1.500" /><circle cx="8" cy="9" r="2" fill="#f1f1f1" /><circle cx="16" cy="17" r="4.500" fill={OR} stroke={OR} strokeWidth="2.500" strokeDasharray="2.500 1.500" /><circle cx="16" cy="17" r="1.800" fill="#fff" /></S>
          </div>
          <span className="ml-[3px] whitespace-nowrap">Options...</span>
          <div className="ml-[5px] flex"><Chev /></div>
          <div className="ml-[3px]"><Sep h={26} /></div>
          <div className="ml-[4px] flex">
            <S w={16} h={22}><path d="M4 18V7h11" stroke="#666" /><path d="M12 4l3 3-3 3M1 16l3 3 3-3" stroke="#666" /><path d="M6 19h9V9" stroke="#666" strokeDasharray="1 1" /></S>
          </div>
          <div className="flex flex-col leading-[13px] w-[74px] whitespace-nowrap text-[#222] tracking-[-0.5px] text-right">
            <div>W: 841.00mm</div>
            <div>H: 594.00mm</div>
          </div>
          <div className="ml-[3px]"><Sep h={22} /></div>
          <div className="ml-[4px] flex">
            <S w={16} h={18}><path d="M7 1v14M0 8h14" stroke="#555" /><path d="M8 9l7 3-3 1 0 3z" fill="#777" /></S>
          </div>
          <div className="ml-[2px] flex flex-col leading-[13px] w-[73px] whitespace-pre text-[#222] tracking-[-0.35px] text-right">
            <div>X : 140.57mm</div>
            <div>Y :   99.54mm</div>
          </div>
        </div>
        <div className="w-[642px] shrink-0 flex items-center">
          <Grip />
          <div className="ml-[4px] flex"><NavCirc kind="first" /></div>
          <div className="ml-[6px] flex"><NavCirc kind="prev" /></div>
          <div className="ml-[4px] w-[95px] h-[22px] border-2 border-[#cfcfcf] rounded-[3px] bg-[#f6f6f6] flex items-center justify-end pr-[3px] text-[#555]">1 <span className="text-[16px] leading-none mx-[1px] font-light">/</span><span className="-mt-[2px]">1</span></div>
          <div className="ml-[5px] flex"><NavCirc kind="next" /></div>
          <div className="ml-[6px] flex"><NavCirc kind="last" /></div>
          <div className="ml-[4px]"><Sep h={26} /></div>
          <div className="ml-[4px] flex"><CircArrow /></div>
          <div className="ml-[6px] flex"><CircArrow dir={1} faded /></div>
        </div>
        <div className="flex-1 flex items-center">
          <Grip />
          <div className="ml-[7px] flex"><S w={16} h={21}><path d="M0.500 0.500h10l5 5v15h-15z" fill="#fff" stroke="#777" /><path d="M10.500 0.500l5 5h-5z" fill="#666" /></S></div>
          <div className="ml-[6px] w-[28px] h-[28px] bg-[#e2cf9f] border border-[#cdbf98] rounded-[2px] flex items-center justify-center">
            <S w={18} h={22}><rect x="0.500" y="0.500" width="16" height="9" fill="#fff" stroke="#777" /><path d="M0.500 12.500h11l5 4v5h-16z" fill="#fff" stroke="#777" /><path d="M11.500 12.500l5 4h-5z" fill="#666" /></S>
          </div>
          <div className="ml-[1px] flex">
            <S w={26} h={18}><path d="M0.500 1.500h7l3 3v12H0.500zM14.500 1.500h7l3 3v12h-10z" stroke="#bbb" /><path d="M7.500 1.500l3 3h-3zM21.500 1.500l3 3h-3z" fill="#bbb" /></S>
          </div>
          <div className="ml-[3px] flex">
            <S w={25} h={22}><path d="M0.500 0.500h10v9h-10zM14.500 0.500h10v9h-10zM0.500 12.500h7l3 3v6h-10zM14.500 12.500h7l3 3v6h-10z" stroke="#bbb" /><path d="M7.500 12.500l3 3h-3zM21.500 12.500l3 3h-3z" fill="#999" /></S>
          </div>
          <div className="ml-[5px]"><Grip /></div>
          <div className="ml-[2px]"><Combo w={81} /></div>
          <div className="ml-[2px]"><Sep h={26} /></div>
          <div className="ml-[5px] flex"><Zoomer /></div>
          <div className="ml-[5px] w-[100px] h-[16px] relative flex items-center">
            <div className="w-[68px] h-[3px] bg-[#8a8a8a]" /><div className="w-[32px] h-[3px] bg-[#c0c0c0]" />
            <div className="absolute left-[49px] top-[2px] w-px h-[12px] border-l border-dotted border-[#666]" />
            <div className="absolute left-[65px] top-[-1px] w-[18px] h-[18px] rounded-full bg-white border border-[#777] flex items-center justify-center"><div className="w-[7px] h-[7px] rounded-full bg-[#808080]" /></div>
          </div>
          <div className="ml-[5px] flex"><Zoomer plus /></div>
          <div className="ml-[6px]"><Grip /></div>
          <div className="ml-[4px] flex">
            <S w={21} h={21}><rect width="21" height="21" rx="3" fill="#a50f0f" /><path d="M4 17c3-2 5-6 6-12 1 6 3 8 7 8-5 0-9 1-13 4z" stroke="#fff" strokeWidth="1.500" /></S>
          </div>
          <div className="ml-[5px] flex"><Chev /></div>
          <div className="ml-[8px] flex flex-col items-center -mt-[12px] gap-[2px]"><Chev /><div className="w-[8px] h-px bg-[#444]" /></div>
        </div>
      </div>
    </div>
  );
}
